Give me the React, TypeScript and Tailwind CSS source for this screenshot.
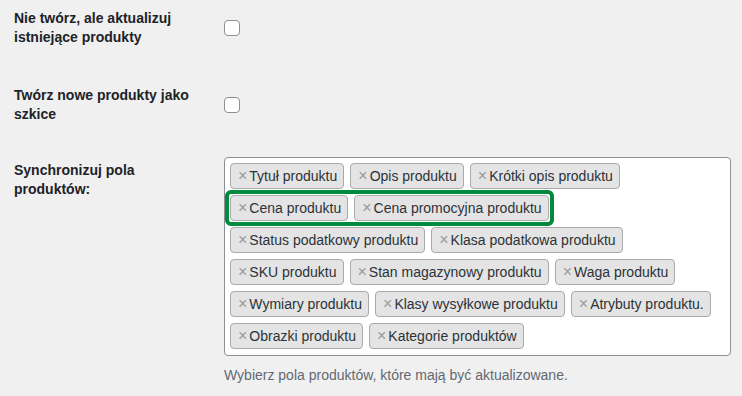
import React from "react";

const ROWS: string[][] = [
  ["Tytuł produktu", "Opis produktu", "Krótki opis produktu"],
  ["Cena produktu", "Cena promocyjna produktu"],
  ["Status podatkowy produktu", "Klasa podatkowa produktu"],
  ["SKU produktu", "Stan magazynowy produktu", "Waga produktu"],
  ["Wymiary produktu", "Klasy wysyłkowe produktu", "Atrybuty produktu."],
  ["Obrazki produktu", "Kategorie produktów"],
];

function Checkbox() {
  return <span className="block h-4 w-4 shrink-0 rounded-[4px] border border-[#8c8f94] bg-white" />;
}

function Tag({ label }: { label: string }) {
  return (
    <span className="flex h-[26px] items-center rounded-[4px] border border-[#aaaaaa] bg-[#e4e4e4] pl-[7px] pr-[6px] text-[14px] text-[#2c3338]">
      <span className="mr-[2px] text-[16px] leading-none text-[#999999]">×</span>
      {label}
    </span>
  );
}

export default function App() {
  return (
    <div className="min-h-screen bg-[#f0f0f1] px-[14px] font-['Liberation_Sans',Arial,sans-serif] text-[#1d2327]">
      <div className="flex items-center pt-[9px]">
        <p className="mr-[20px] w-[190px] shrink-0 text-[14px] font-bold leading-[19px]">
          Nie twórz, ale aktualizuj istniejące produkty
        </p>
        <Checkbox />
      </div>

      <div className="mt-[39px] flex items-center">
        <p className="mr-[20px] w-[190px] shrink-0 text-[14px] font-bold leading-[19px]">
          Twórz nowe produkty jako szkice
        </p>
        <Checkbox />
      </div>

      <div className="mt-[33px] flex items-start">
        <p className="mr-[20px] w-[190px] shrink-0 pt-[4px] text-[14px] font-bold leading-[19px]">
          Synchronizuj pola produktów:
        </p>
        <div className="shrink-0">
          <div className="relative w-[507px] rounded-[4px] border border-[#8c8f94] bg-white px-[5px] pt-[5px] pb-[6px]">
            <div className="flex flex-col gap-[6px]">
              {ROWS.map((row, i) => (
                <div key={i} className="flex gap-[6px]">
                  {row.map((t) => (
                    <Tag key={t} label={t} />
                  ))}
                </div>
              ))}
            </div>
            <div className="pointer-events-none absolute left-0 top-[32px] h-[36px] w-[329px] rounded-[6px] border-[4px] border-[#008a3e]" />
          </div>
          <p className="mt-[10px] text-[14px] leading-[19px] text-[#646970]">
            Wybierz pola produktów, które mają być aktualizowane.
          </p>
        </div>
      </div>
    </div>
  );
}
